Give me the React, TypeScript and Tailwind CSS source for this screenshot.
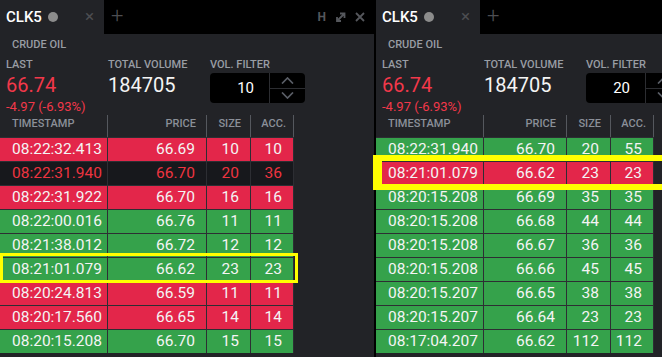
import React from 'react'

type Tone = 'red' | 'green' | 'dark'

interface Trade {
  time: string
  price: string
  size: string
  acc: string
  tone: Tone
  marked?: boolean
}

const leftTrades: Trade[] = [
  { time: '08:22:32.413', price: '66.69', size: '10', acc: '10', tone: 'red' },
  { time: '08:22:31.940', price: '66.70', size: '20', acc: '36', tone: 'dark' },
  { time: '08:22:31.922', price: '66.70', size: '16', acc: '16', tone: 'red' },
  { time: '08:22:00.016', price: '66.76', size: '11', acc: '11', tone: 'green' },
  { time: '08:21:38.012', price: '66.72', size: '12', acc: '12', tone: 'green' },
  { time: '08:21:01.079', price: '66.62', size: '23', acc: '23', tone: 'green', marked: true },
  { time: '08:20:24.813', price: '66.59', size: '11', acc: '11', tone: 'red' },
  { time: '08:20:17.560', price: '66.65', size: '14', acc: '14', tone: 'red' },
  { time: '08:20:15.208', price: '66.70', size: '15', acc: '15', tone: 'green' },
]

const rightTrades: Trade[] = [
  { time: '08:22:31.940', price: '66.70', size: '20', acc: '55', tone: 'green' },
  { time: '08:21:01.079', price: '66.62', size: '23', acc: '23', tone: 'red', marked: true },
  { time: '08:20:15.208', price: '66.69', size: '35', acc: '35', tone: 'green' },
  { time: '08:20:15.208', price: '66.68', size: '44', acc: '44', tone: 'green' },
  { time: '08:20:15.208', price: '66.67', size: '36', acc: '36', tone: 'green' },
  { time: '08:20:15.208', price: '66.66', size: '45', acc: '45', tone: 'green' },
  { time: '08:20:15.207', price: '66.65', size: '38', acc: '38', tone: 'green' },
  { time: '08:20:15.207', price: '66.64', size: '23', acc: '23', tone: 'green' },
  { time: '08:17:04.207', price: '66.62', size: '112', acc: '112', tone: 'green' },
]

const toneClass: Record<Tone, string> = {
  red: 'bg-[#e3264a] text-[#f4f4f4]',
  green: 'bg-[#35a24b] text-[#f4f4f4]',
  dark: 'bg-[#17181c] text-[#ee3440]',
}

function Chevron({ up }: { up?: boolean }) {
  return (
    <svg width="13" height="7" viewBox="0 0 13 7" fill="none" stroke="#5a5e66" strokeWidth="1.7">
      <path d={up ? 'M1 6.5L6.5 1L12 6.5' : 'M1 0.5L6.5 6L12 0.5'} />
    </svg>
  )
}

function Quote({ filter, cols }: { filter: string; cols: string }) {
  return (
    <div className="flex flex-col">
      <div className="pl-3 pt-[4px] text-[11px] font-medium leading-[14px] text-[#999da4]">CRUDE OIL</div>
      <div className="flex pl-[6px] pt-[6px]">
        <div className="w-[102px] shrink-0">
          <div className="text-[11px] font-medium leading-[14px] text-[#999da4]">LAST</div>
          <div className="mt-[1px] text-[20px] leading-[24px] text-[#f2384a]">66.74</div>
          <div className="mt-[2px] text-[13px] leading-[16px] text-[#f2384a]">-4.97 (-6.93%)</div>
        </div>
        <div className="w-[102px] shrink-0">
          <div className="text-[11px] font-medium leading-[14px] text-[#999da4]">TOTAL VOLUME</div>
          <div className="mt-[1px] text-[20px] leading-[24px] text-[#f4f4f4]">184705</div>
        </div>
        <div className="shrink-0">
          <div className="text-[11px] font-medium leading-[14px] text-[#999da4]">VOL. FILTER</div>
          <div className="mt-[1px] flex h-[30px] w-[95px] rounded-[4px] bg-black">
            <div className="w-[59px] pr-[15px] text-right text-[15px] leading-[31px] text-white">{filter}</div>
            <div className="flex flex-1 flex-col border-l border-[#2c2d31]">
              <div className="flex flex-1 items-center justify-center border-b border-[#2c2d31]">
                <Chevron up />
              </div>
              <div className="flex flex-1 items-center justify-center">
                <Chevron />
              </div>
            </div>
          </div>
        </div>
      </div>
      <div className={`grid ${cols} h-[22px] text-[11px] font-medium leading-[18px] text-[#8b9099]`}>
        <div className="pl-3">TIMESTAMP</div>
        <div className="border-l border-[#55585e] pr-[10px] text-right">PRICE</div>
        <div className="border-l border-[#55585e] pr-[9px] text-right">SIZE</div>
        <div className="border-x border-[#55585e] pr-[7px] text-right">ACC.</div>
      </div>
    </div>
  )
}

function TradeTable({ trades, cols, mark }: { trades: Trade[]; cols: string; mark: string }) {
  return (
    <div className="flex flex-col">
      {trades.map((t, i) => (
        <div key={i} className={t.marked ? 'relative z-10' : ''}>
          <div className={`grid ${cols} h-[24px] border-t border-[#2d2e33] text-[15.5px] leading-[23px] ${toneClass[t.tone]}`}>
            <div className="pl-3">{t.time}</div>
            <div className="border-l border-[#2d2e33] pr-[11px] text-right">{t.price}</div>
            <div className="border-l border-[#2d2e33] pr-[11px] text-right">{t.size}</div>
            <div className="border-x border-[#2d2e33] pr-[11px] text-right">{t.acc}</div>
          </div>
          {t.marked && <div className={`pointer-events-none absolute border-[#ffff00] ${mark}`} />}
        </div>
      ))}
    </div>
  )
}

function TabBar({ showTools }: { showTools?: boolean }) {
  return (
    <div className="flex h-[34px] shrink-0 bg-black">
      <div className="flex h-full w-[104px] items-center bg-[#222327] pl-[6px]">
        <span className="text-[15px] font-medium text-white">CLK5</span>
        <span className="ml-[6px] h-[10px] w-[10px] rounded-full bg-[#8c8c8c]" />
        <span className="ml-auto mr-[10px] text-[17px] text-[#4d4e52]">×</span>
      </div>
      <span className="ml-[7px] text-[22px] font-light leading-[32px] text-[#4d4e52]">+</span>
      {showTools && (
        <div className="ml-auto flex items-center gap-[9px] pr-[9px] text-[#55575c]">
          <span className="text-[12px] font-bold">H</span>
          <svg width="11" height="11" viewBox="0 0 11 11" fill="none" stroke="#55575c" strokeWidth="1.8">
            <path d="M5 1.5H9.5V6M9 2L2 9M2 5V9H6" />
          </svg>
          <svg width="10" height="10" viewBox="0 0 10 10" stroke="#55575c" strokeWidth="1.8">
            <path d="M1 1L9 9M9 1L1 9" />
          </svg>
        </div>
      )}
    </div>
  )
}

export default function App() {
  const leftCols = 'grid-cols-[107px_99px_44px_44px]'
  const rightCols = 'grid-cols-[107px_83px_44px_44px]'
  return (
    <div className="flex h-[357px] w-[662px] overflow-hidden bg-black font-['Roboto',sans-serif]">
      <div className="flex w-[374px] shrink-0 flex-col bg-[#222327]">
        <TabBar showTools />
        <div className="w-[294px]">
          <Quote filter="10" cols={leftCols} />
          <TradeTable trades={leftTrades} cols={leftCols} mark="left-0 -top-[4px] h-[30px] w-[298px] border-[3px]" />
        </div>
      </div>
      <div className="ml-[2px] flex flex-1 flex-col bg-[#222327]">
        <TabBar />
        <div className="w-[278px]">
          <Quote filter="20" cols={rightCols} />
          <TradeTable trades={rightTrades} cols={rightCols} mark="-left-[3px] -top-[6px] h-[35px] w-[300px] border-[6px] border-l-[9px]" />
        </div>
      </div>
    </div>
  )
}
